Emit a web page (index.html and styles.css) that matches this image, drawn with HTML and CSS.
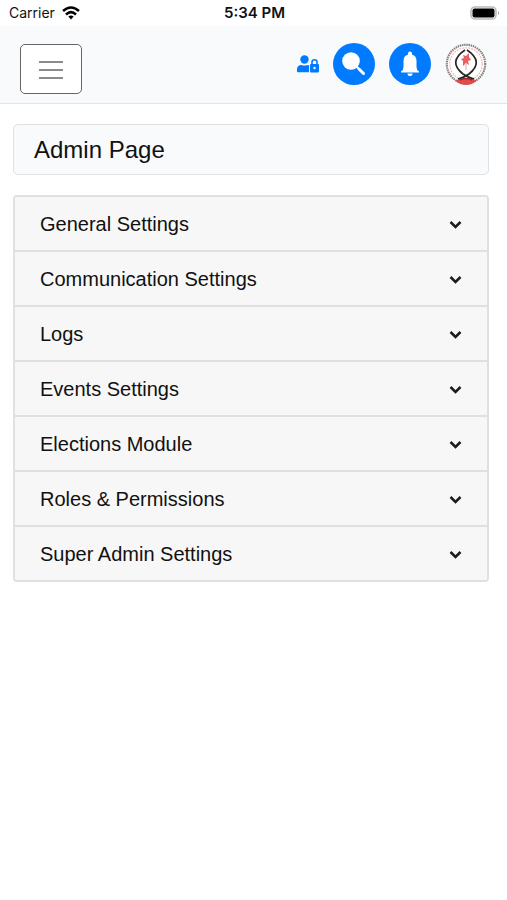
FILE: index.html
```html
<!DOCTYPE html>
<html lang="en">
<head>
  <meta charset="UTF-8">
  <meta name="viewport" content="width=device-width, initial-scale=1.0">
  <title>Admin Page</title>
  <link rel="stylesheet" href="styles.css">
</head>
<body>
  <div class="status-bar">
    <div class="carrier">
      <span>Carrier</span>
      <svg width="18" height="14" viewBox="0 0 18 14" fill="none" stroke="#000" stroke-width="2.6">
        <path d="M1 5Q9-2 17 5"/>
        <path d="M4 8.4Q9 4 14 8.4"/>
        <path d="M6.3 10.6Q9 8.6 11.7 10.6L9 13.4Z" fill="#000" stroke="none"/>
      </svg>
    </div>
    <div class="time">5:34 PM</div>
    <div class="battery">
      <svg width="30" height="14" viewBox="0 0 30 14">
        <rect x="1" y="1" width="25" height="12" rx="4" fill="#fff" stroke="#bbb" stroke-width="1.6"/>
        <rect x="2.500" y="2.500" width="22" height="9" rx="2" fill="#000"/>
        <path d="M28 5q2 2 0 4z" fill="#999"/>
      </svg>
    </div>
  </div>

  <header class="navbar">
    <button class="menu-btn" type="button" aria-label="Menu">
      <svg width="24" height="20" viewBox="0 0 24 20" stroke="#8b8b8b" stroke-width="2">
        <path d="M0 3h24M0 11h24M0 19h24"/>
      </svg>
    </button>
    <nav class="nav-icons">
      <a class="user-lock" href="#" aria-label="Admin">
        <svg width="22" height="18" viewBox="0 0 22 18">
          <circle cx="7.5" cy="4.5" r="4.2" fill="#007bff"/>
          <path d="M0 17v-2.500q0-4.500 4.500-4.500q3 1 6 0q1 0 1.500.3v7H1q-1 0-1-.8z" fill="#007bff"/>
          <rect x="13" y="9" width="9" height="8.500" rx="1" fill="#007bff"/>
          <path d="M15 9.500V7.200a2.500 2.500 0 0 1 5 0v2.300" fill="none" stroke="#007bff" stroke-width="1.600"/>
          <circle cx="17.500" cy="13" r="1.200" fill="#fff"/>
        </svg>
      </a>
      <a class="round" href="#" aria-label="Search">
        <svg width="24" height="24" viewBox="0 0 24 24">
          <circle cx="9" cy="9" r="8.800" fill="#fff"/>
          <path d="M14 14L17 17" stroke="#fff" stroke-width="2"/>
          <path d="M17 17L21.500 21.500" stroke="#fff" stroke-width="3" stroke-linecap="round"/>
        </svg>
      </a>
      <a class="round" href="#" aria-label="Notifications">
        <svg width="20" height="26" viewBox="0 0 20 26" fill="#fff">
          <path d="M8 2.500a2 2 0 0 1 4 0v1q4.500 1.300 4.500 6.500v6q0 3 2.500 4.500v1H1v-1q2.500-1.500 2.500-4.500v-6Q3.500 4.800 8 3.500z"/>
          <path d="M7.500 22.500h5a2.500 2.500 0 0 1-5 0z"/>
        </svg>
      </a>
      <a class="logo" href="#" aria-label="Profile">
        <svg width="42" height="42" viewBox="0 0 42 42" fill="none">
          <circle cx="21" cy="21" r="20.500" fill="#fff"/>
          <circle cx="21" cy="21" r="19.200" stroke="#8a8080" stroke-width="2.200" stroke-dasharray="1.500 .7"/>
          <circle cx="21" cy="21" r="16.200" stroke="#f0b8b8" stroke-width="1.200" stroke-dasharray="2 1"/>
          <path d="M10 37.500q11-5 22 0q-5 4.500-11 4.500t-11-4.500z" fill="#e04c4c"/>
          <path d="M15 37q6-3 12 0" stroke="#922" stroke-width="1.500"/>
          <path d="M20 7C8 15 8 23 18 31Q22 34 29 36M22 7C34 15 34 23 24 31Q20 34 13 36" stroke="#252525" stroke-width="1.700"/>
          <path d="M18 12l3 1 3-3v4l2 3-3 1 1 4-3-2-3 3v-5l-2-2 3-1z" fill="#e86060"/>
          <path d="M21 21v6" stroke="#e5a5a5" stroke-width="1"/>
        </svg>
      </a>
    </nav>
  </header>

  <main class="content">
    <h1 class="page-title">Admin Page</h1>

    <div class="accordion">
      <button class="accordion-item" type="button">
        <span>General Settings</span>
        <svg class="chevron" width="13" height="9" viewBox="0 0 13 9"><path d="M1.500 2L6.500 7L11.500 2"/></svg>
      </button>
      <button class="accordion-item" type="button">
        <span>Communication Settings</span>
        <svg class="chevron" width="13" height="9" viewBox="0 0 13 9"><path d="M1.500 2L6.500 7L11.500 2"/></svg>
      </button>
      <button class="accordion-item" type="button">
        <span>Logs</span>
        <svg class="chevron" width="13" height="9" viewBox="0 0 13 9"><path d="M1.500 2L6.500 7L11.500 2"/></svg>
      </button>
      <button class="accordion-item" type="button">
        <span>Events Settings</span>
        <svg class="chevron" width="13" height="9" viewBox="0 0 13 9"><path d="M1.500 2L6.500 7L11.500 2"/></svg>
      </button>
      <button class="accordion-item" type="button">
        <span>Elections Module</span>
        <svg class="chevron" width="13" height="9" viewBox="0 0 13 9"><path d="M1.500 2L6.500 7L11.500 2"/></svg>
      </button>
      <button class="accordion-item" type="button">
        <span>Roles &amp; Permissions</span>
        <svg class="chevron" width="13" height="9" viewBox="0 0 13 9"><path d="M1.500 2L6.500 7L11.500 2"/></svg>
      </button>
      <button class="accordion-item" type="button">
        <span>Super Admin Settings</span>
        <svg class="chevron" width="13" height="9" viewBox="0 0 13 9"><path d="M1.500 2L6.500 7L11.500 2"/></svg>
      </button>
    </div>
  </main>
</body>
</html>
```

FILE: styles.css
```css
* {
  margin: 0;
  padding: 0;
  box-sizing: border-box;
}

body {
  font-family: "Liberation Sans", Arial, sans-serif;
  background-color: #fff;
  color: #111;
}

svg {
  display: block;
}

.status-bar {
  display: grid;
  grid-template-columns: 1fr auto 1fr;
  align-items: center;
  padding: 4px 7px 4px 9px;
  font-family: Inter, sans-serif;
  font-size: 14px;
  line-height: 18px;
}

.carrier {
  display: flex;
  align-items: center;
  gap: 7px;
}

.time {
  font-size: 15px;
  font-weight: 600;
}

.battery {
  justify-self: end;
}

.navbar {
  display: flex;
  justify-content: space-between;
  align-items: center;
  padding: 12px 20px 4px;
  height: 78px;
  background-color: #f8fafc;
  border-bottom: 1px solid #e2e4e6;
}

.menu-btn {
  display: flex;
  justify-content: center;
  align-items: center;
  width: 62px;
  height: 50px;
  background-color: #fff;
  border: 1px solid #666;
  border-radius: 5px;
  cursor: pointer;
}

.nav-icons {
  display: flex;
  align-items: center;
  gap: 14px;
  padding-bottom: 10px;
}

.round {
  display: flex;
  justify-content: center;
  align-items: center;
  width: 42px;
  height: 42px;
  border-radius: 50%;
  background-color: #007bff;
}

.content {
  padding: 20px 18px 20px 13px;
}

.page-title {
  padding: 10px 20px;
  margin-bottom: 20px;
  font-size: 24px;
  font-weight: 400;
  line-height: 29px;
  background-color: #f8fafc;
  border: 1px solid #dfe1e4;
  border-radius: 5px;
}

.accordion {
  border: 2px solid #e0e0e3;
  border-radius: 4px;
  overflow: hidden;
}

.accordion-item {
  display: flex;
  justify-content: space-between;
  align-items: center;
  width: 100%;
  padding: 16px 25px 14px;
  font-family: inherit;
  font-size: 20px;
  line-height: 23px;
  color: #111;
  text-align: left;
  background-color: #f7f7f7;
  border: none;
  border-bottom: 2px solid #e0e0e3;
  cursor: pointer;
}

.accordion-item:last-child {
  border-bottom: none;
}

.chevron {
  fill: none;
  stroke: #1c1c1c;
  stroke-width: 2.5;
}
```
